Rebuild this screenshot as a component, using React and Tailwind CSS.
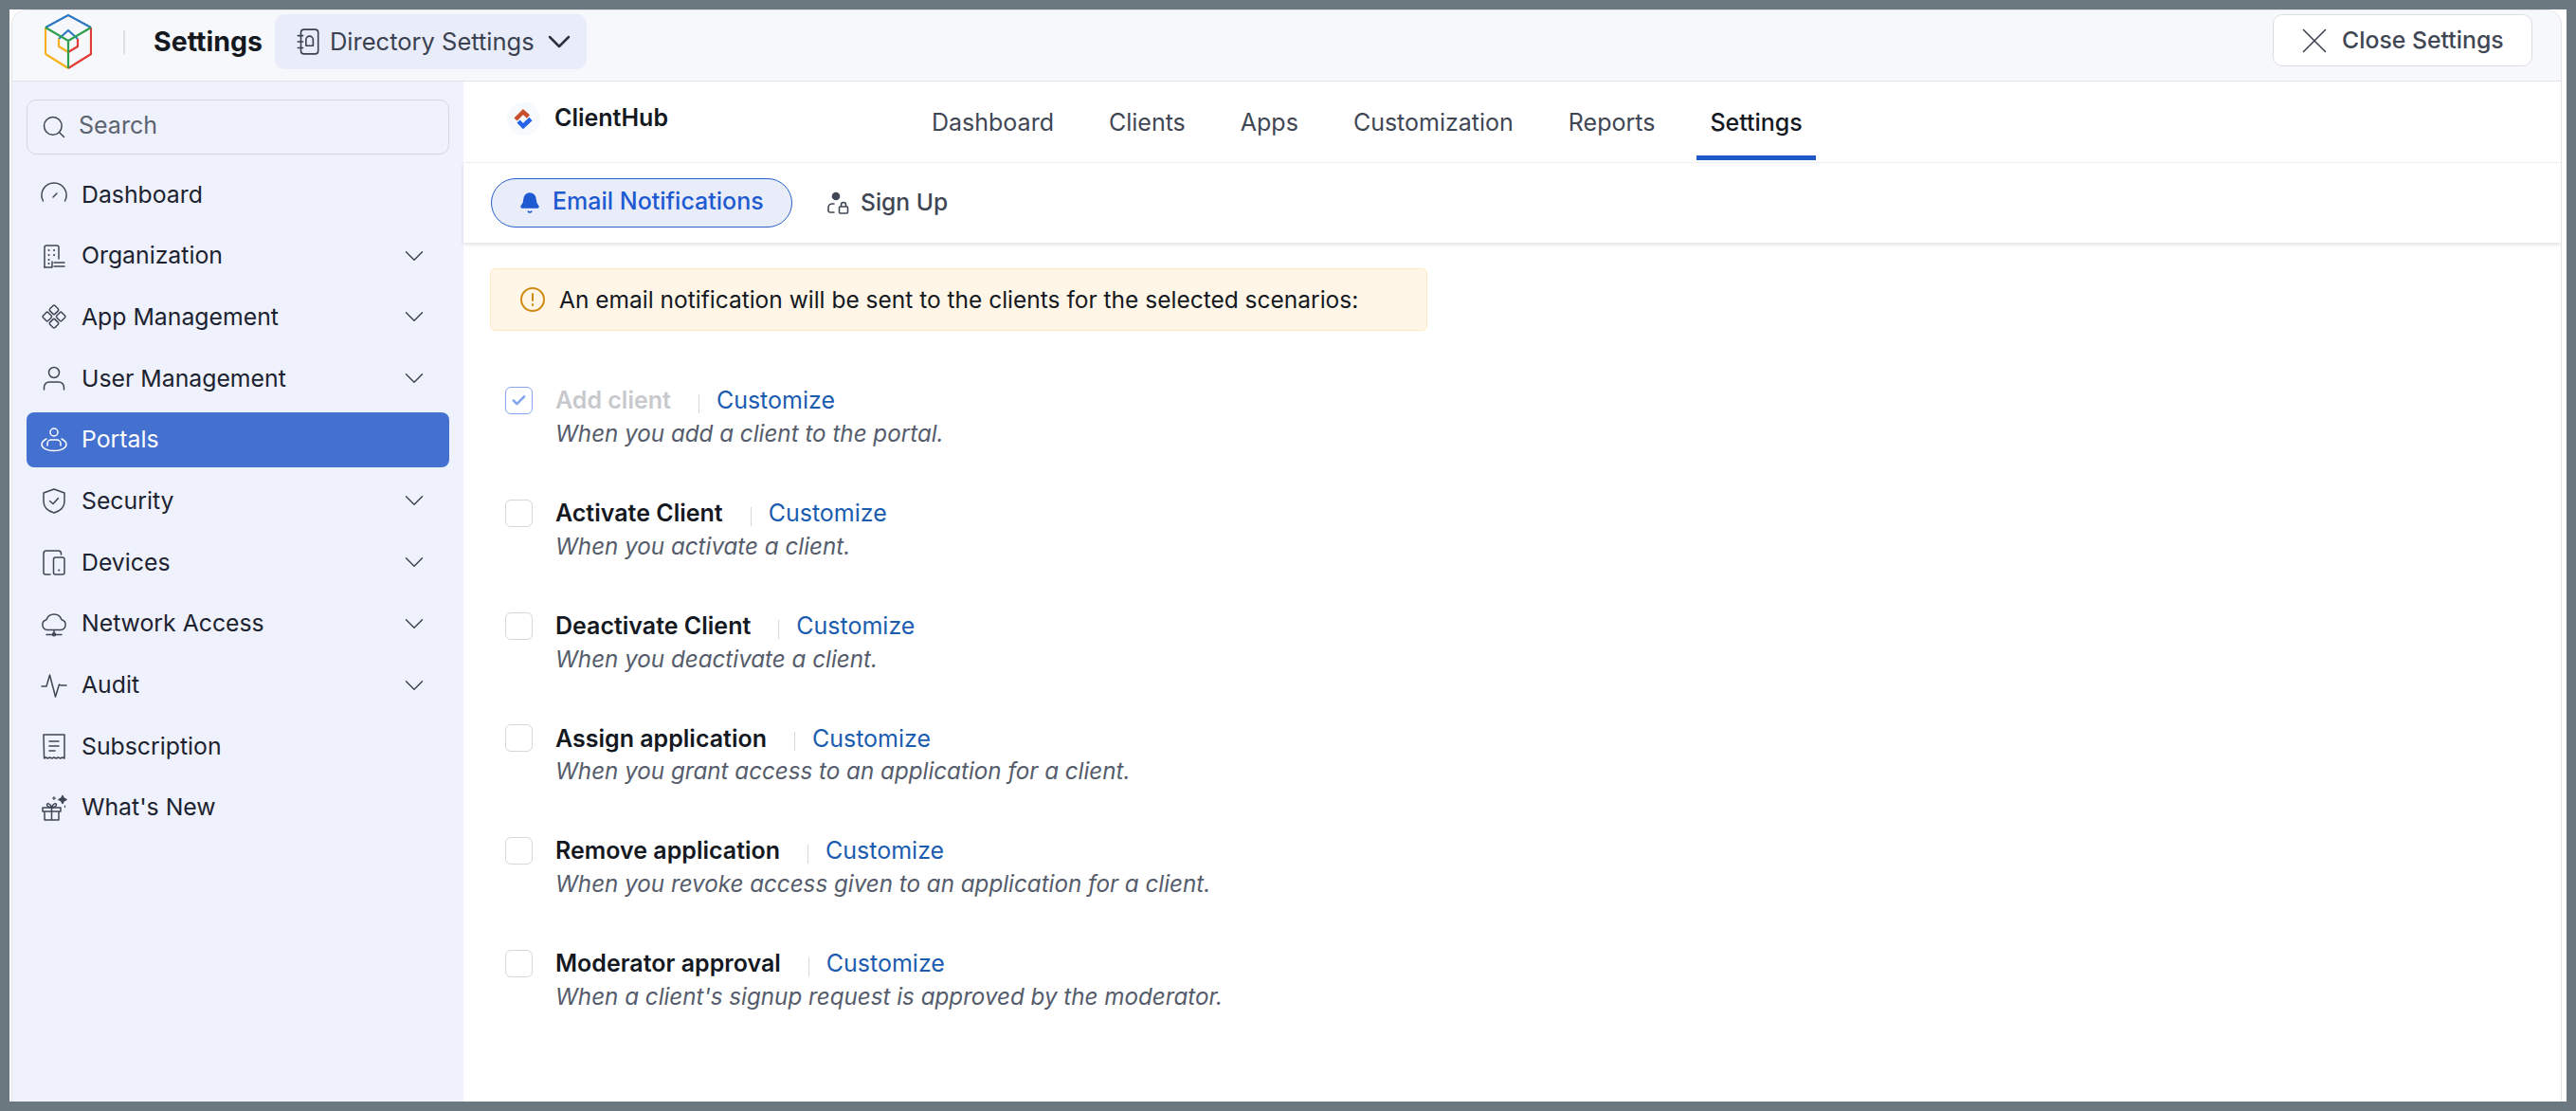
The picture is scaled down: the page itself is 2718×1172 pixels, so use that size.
import React from 'react';
import { ChevronDown, X, Search, Bell, Check } from 'lucide-react';

const Icon = ({ children, className = 'w-[28px] h-[28px]' }) => (
  <svg viewBox="0 0 28 28" fill="none" stroke="currentColor" strokeWidth="1.5" strokeLinecap="round" strokeLinejoin="round" className={className}>
    {children}
  </svg>
);

const navItems = [
  { label: 'Dashboard', icon: <><path d="M2.500 21A13 13 0 1 1 25.500 21" /><path d="M13 17l4-4" /></> },
  { label: 'Organization', arrow: true, icon: <><path d="M4 26V5a2 2 0 0 1 2-2h11a2 2 0 0 1 2 2v12" /><path d="M4 26h8V20" /><path d="M14 21h11M14 25h11" /><path d="M8.500 8h.1M14 8h.1M8.500 13h.1M14 13h.1M8.500 18h.1M8.500 22h.1" strokeWidth="2" /></> },
  { label: 'App Management', arrow: true, icon: <><rect x="10.200" y="3" width="7.600" height="7.600" rx="1.500" transform="rotate(45 14 6.800)" /><rect x="3" y="10.200" width="7.600" height="7.600" rx="1.500" transform="rotate(45 6.800 14)" /><rect x="17.400" y="10.200" width="7.600" height="7.600" rx="1.500" transform="rotate(45 21.200 14)" /><rect x="10.200" y="17.400" width="7.600" height="7.600" rx="1.500" transform="rotate(45 14 21.200)" /></> },
  { label: 'User Management', arrow: true, icon: <><circle cx="14" cy="8" r="5.500" /><path d="M3.500 26v-2.500A5.500 5.500 0 0 1 9 18h10a5.500 5.500 0 0 1 5.500 5.500V26" /></> },
  { label: 'Portals', active: true, icon: <><circle cx="14" cy="6" r="4" /><path d="M7 20v-2a4 4 0 0 1 4-4h6a4 4 0 0 1 4 4v2" /><path d="M6 13C3 14.500 1 16.500 1 19c0 3.500 5.500 6.500 13 6.500s13-3 13-6.500c0-2.500-2-4.500-5-6" /></> },
  { label: 'Security', arrow: true, icon: <><path d="M14 2l11 4v9c0 6-4.500 10-11 12C7.500 25 3 21 3 15V6z" /><path d="M9.500 14.500l3.500 3 5.500-6" /></> },
  { label: 'Devices', arrow: true, icon: <><path d="M21.500 6V5a3 3 0 0 0-3-3H6a3 3 0 0 0-3 3v20a2 2 0 0 0 2 2h5" /><rect x="13.500" y="9" width="11.500" height="18" rx="2" /><path d="M19.200 22.500h.1" strokeWidth="2" /></> },
  { label: 'Network Access', arrow: true, icon: <><path d="M7 20.500a5.500 5.500 0 0 1-1-10.800A8.500 8.500 0 0 1 22 9.700a5.500 5.500 0 0 1-1 10.800z" /><path d="M14 20.500V25M6 25.500h16" /><circle cx="14" cy="25.300" r="1.500" /></> },
  { label: 'Audit', arrow: true, icon: <path d="M1 15h5l3.500-12 6 23 4-13 1.500 1H27" /> },
  { label: 'Subscription', icon: <><path d="M3 2h22v25l-2.200-1-2.200 1-2.200-1-2.200 1-2.200-1-2.200 1-2.200-1-2.200 1-2-1-1.800 1z" /><path d="M9 9h10M9 14h10M9 19h6" /></> },
  { label: "What's New", icon: <><path d="M2 14h19v4H2zM4 18v9h15v-9M11.500 14v13" /><path d="M11.500 14c-3-.5-5-1.500-5-3 0-2 3.500-2 5 3zM11.500 14c3-.5 5-1.500 5-3 0-2-3.500-2-5 3z" /><path d="M23 1.500l1.300 2.700L27 5.500l-2.700 1.300L23 9.500l-1.300-2.700L19 5.500l2.700-1.300z" fill="currentColor" /><path d="M14 2.500v3M12.500 4h3M25.500 12v1.500" strokeWidth="1.200" /></> },
];

const tabs = ['Dashboard', 'Clients', 'Apps', 'Customization', 'Reports', 'Settings'];

const scenarios = [
  { title: 'Add client', desc: 'When you add a client to the portal.', disabled: true },
  { title: 'Activate Client', desc: 'When you activate a client.' },
  { title: 'Deactivate Client', desc: 'When you deactivate a client.' },
  { title: 'Assign application', desc: 'When you grant access to an application for a client.' },
  { title: 'Remove application', desc: 'When you revoke access given to an application for a client.' },
  { title: 'Moderator approval', desc: "When a client's signup request is approved by the moderator." },
];

const CubeLogo = () => (
  <svg viewBox="0 0 50 58" fill="none" strokeWidth="2.200" strokeLinejoin="round" className="w-[50px] h-[58px] shrink-0">
    <path d="M1 14L25 1l24 13" stroke="#2c78c0" />
    <path d="M1 42V14" stroke="#f5b21f" />
    <path d="M1 42l24 15" stroke="#f5b21f" />
    <path d="M49 14v28L25 57" stroke="#e23a34" />
    <path d="M15 26l10-9 10 9" stroke="#2c78c0" />
    <path d="M15 26v8l10 6" stroke="#f5b21f" />
    <path d="M35 26v8l-10 6" stroke="#e23a34" />
    <path d="M1 14l24 14 24-14M25 28v29" stroke="#2e9e4f" />
  </svg>
);

const AppLogo = () => (
  <svg viewBox="0 0 35 35" fill="none" className="w-[35px] h-[35px]">
    <circle cx="17.500" cy="17.500" r="17.500" fill="#f6fafd" />
    <path d="M9 18l8-8 5.500 5" stroke="#c8502c" strokeWidth="4.500" />
    <path d="M12 20l5 5 8-7.500" stroke="#2563eb" strokeWidth="4.500" />
  </svg>
);

const NavRow = ({ item }) => (
  <div className={`h-[58px] mb-[6.700px] rounded-[8px] flex items-center pl-[15px] pr-[20px] ${item.active ? 'bg-[#4470d0] text-white' : 'text-[#1c2230]'}`}>
    <span className={item.active ? 'text-white' : 'text-[#3f4654]'}><Icon>{item.icon}</Icon></span>
    <span className="ml-[15px] text-[24.800px] flex-1 leading-none">{item.label}</span>
    {item.arrow && <ChevronDown strokeWidth={1} className="w-[34px] h-[34px] text-[#3a4150]" />}
  </div>
);

const Scenario = ({ s }) => (
  <div className="flex h-[118.800px] pl-[18px]">
    <div className={`w-[29px] h-[29px] rounded-[6px] border flex items-center justify-center ${s.disabled ? 'border-[#86a5ee]' : 'border-[#d5d7dc]'}`}>
      {s.disabled && <Check strokeWidth={3.500} className="w-[17px] h-[17px] text-[#86a5ee]" />}
    </div>
    <div className="ml-[24px]">
      <div className="flex items-center h-[30px]">
        <span className={`text-[25px] font-semibold ${s.disabled ? 'text-[#c7c9cd]' : 'text-[#14181f]'}`}>{s.title}</span>
        <span className="w-px h-[20px] mt-[6px] bg-[#d5d7dc] ml-[29px] mr-[18px]" />
        <span className="text-[25px] text-[#1a5cb0]">Customize</span>
      </div>
      <p className="mt-[5px] text-[24.200px] italic text-[#555c6b] leading-[30px]">{s.desc}</p>
    </div>
  </div>
);

export default function App() {
  return (
    <div className="h-screen bg-[#6b7880] p-[10px] font-['Inter',sans-serif]">
      <div className="h-full bg-white pl-[2px] pr-[5px]">
        <div className="h-full flex flex-col border-x border-t border-[#e2e3e6] rounded-t-[16px] overflow-hidden">
          {/* Top bar */}
          <header className="h-[75px] shrink-0 bg-[#f7f8fc] border-b border-[#e3e4e8] flex items-start pt-[4px] pl-[34px] pr-[30px]">
            <div className="h-[58px] flex items-center">
              <CubeLogo />
              <span className="w-[2px] h-[25px] bg-[#dddfe3] ml-[33px]" />
              <span className="ml-[30px] text-[28.500px] font-bold text-[#14181f]">Settings</span>
              <div className="ml-[13px] h-[58px] w-[329px] rounded-[10px] bg-[#e9edf9] flex items-center pl-[20px]">
                <Icon className="w-[30px] h-[30px] text-[#3a4150]">
                  <path d="M7 5a3 3 0 0 1 3-3h11a3 3 0 0 1 3 3v18a3 3 0 0 1-3 3H10a3 3 0 0 1-3-3zM4 8h5M4 14h5M4 20h5" />
                  <path d="M12 18v-6a3.500 3.500 0 0 1 7 0v6h-7" />
                </Icon>
                <span className="ml-[8px] text-[25.500px] text-[#3a4150]">Directory Settings</span>
                <ChevronDown strokeWidth={1.500} className="ml-[6px] w-[40px] h-[40px] text-[#2a303c]" />
              </div>
            </div>
            <div className="ml-auto w-[274px] h-[55px] rounded-[10px] bg-white border border-[#dcdde0] flex items-center pl-[20px]">
              <X strokeWidth={0.800} className="w-[46px] h-[46px] text-[#3a4150]" />
              <span className="ml-[6px] text-[24.800px] font-medium text-[#3f4654]">Close Settings</span>
            </div>
          </header>

          <div className="flex-1 flex min-h-0">
            {/* Sidebar */}
            <aside className="w-[476px] shrink-0 bg-[#eff2fc] pl-[15px] pr-[15px] pt-[19px]">
              <div className="h-[58px] rounded-[10px] border border-[#d3d6de] flex items-center pl-[14px] mb-[13px]">
                <Search strokeWidth={1.300} className="w-[28px] h-[28px] text-[#3f4654]" />
                <span className="ml-[12px] -mt-[2px] text-[25px] text-[#5c6371]">Search</span>
              </div>
              {navItems.map((item) => <NavRow key={item.label} item={item} />)}
            </aside>

            {/* Main */}
            <main className="flex-1 min-w-0">
              <div className="h-[86px] border-b border-[#eeeff1] flex relative">
                <div className="absolute left-[46px] top-[22px] flex items-center">
                  <AppLogo />
                  <span className="ml-[15px] -mt-[2px] text-[25px] font-semibold text-[#14181f]">ClientHub</span>
                </div>
                <nav className="ml-[480px] flex">
                  {tabs.map((t) => (
                    <div key={t} className={`px-[14px] mr-[30px] h-[83px] flex items-center text-[25px] border-b-[5px] pt-[9px] ${t === 'Settings' ? 'border-[#1f58c7] text-[#14181f] font-medium' : 'border-transparent text-[#3f4654]'}`}>{t}</div>
                  ))}
                </nav>
              </div>
              <div className="h-[84px] flex items-center pl-[29px] shadow-[0_2px_4px_rgba(30,40,70,0.14)]">
                <div className="h-[52px] w-[318px] rounded-full border border-[#2a5fc9] bg-[#e9edf9] flex items-center pl-[28px]">
                  <Bell fill="currentColor" strokeWidth={1.500} className="w-[24px] h-[24px] text-[#1e5ad1]" />
                  <span className="ml-[12px] -mt-[2px] text-[25px] font-medium text-[#1e5ad1]">Email Notifications</span>
                </div>
                <svg viewBox="0 0 24 24" fill="none" stroke="#3f4654" strokeWidth="1.600" className="ml-[36px] w-[24px] h-[24px]">
                  <circle cx="10" cy="5" r="4.300" fill="#3f4654" stroke="none" />
                  <path d="M8 13H6a4 4 0 0 0-4 4v3a2 2 0 0 0 2 2h4" strokeLinecap="round" />
                  <rect x="13.500" y="16" width="9" height="7" rx="1" />
                  <path d="M15.500 16v-2a2.500 2.500 0 0 1 5 0v2" />
                </svg>
                <span className="ml-[12px] -mt-[2px] text-[24.600px] font-medium text-[#3f4654]">Sign Up</span>
              </div>
              <div className="pl-[28px] pt-[27px]">
                <div className="w-[989px] h-[66px] rounded-[6px] bg-[#fff6e7] border border-[#fde8c0] flex items-center pl-[30px]">
                  <svg viewBox="0 0 28 28" fill="none" stroke="#d08a12" strokeWidth="2" className="w-[28px] h-[28px]">
                    <circle cx="14" cy="14" r="12" />
                    <path d="M14 8v7M14 19v1" strokeLinecap="round" />
                  </svg>
                  <span className="ml-[14px] text-[24.500px] text-[#14181f]">An email notification will be sent to the clients for the selected scenarios:</span>
                </div>
                <div className="mt-[59px] -ml-[2px]">
                  {scenarios.map((s) => <Scenario key={s.title} s={s} />)}
                </div>
              </div>
            </main>
          </div>
        </div>
      </div>
    </div>
  );
}
